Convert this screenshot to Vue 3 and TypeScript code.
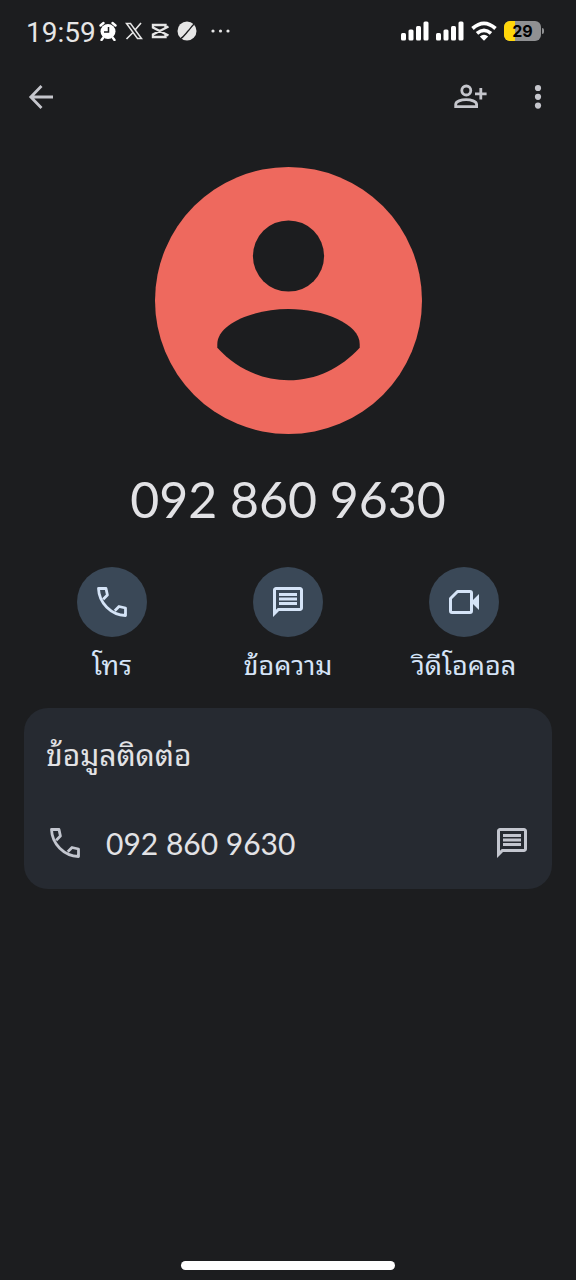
<script setup lang="ts">
type IconName = 'call' | 'chat' | 'video'

interface Action {
  icon: IconName
  label: string
}

const phoneNumber = '092 860 9630'
const batteryLevel = 29

const actions: Action[] = [
  { icon: 'call', label: 'โทร' },
  { icon: 'chat', label: 'ข้อความ' },
  { icon: 'video', label: 'วิดีโอคอล' },
]
</script>

<template>
  <div class="screen">
    <div class="status">
      <div class="status-left">
        <span class="time">19:59</span>
        <svg width="18" height="20" viewBox="0 0 18 20" aria-hidden="true">
          <circle cx="9" cy="10.500" r="7.500" fill="#fff" />
          <path d="M1.500 4.500 4.500 2M16.500 4.500 13.500 2M4 17 2.500 19M14 17l1.500 2" stroke="#fff" stroke-width="2.400" stroke-linecap="round" />
          <path d="M9.500 6v5H5" fill="none" stroke="#1c1d1f" stroke-width="1.500" />
        </svg>
        <svg width="18" height="18" viewBox="0 0 18 18" fill="none" stroke="#e6e6e6" aria-hidden="true">
          <path d="M1.500 1.500h4L16.500 16.500h-4z" stroke-width="1.500" />
          <path d="M16 1 10 8M8 10.500 1.500 17" stroke-width="1.600" />
        </svg>
        <svg width="18" height="18" viewBox="0 0 18 18" fill="none" stroke="#e6e6e6" stroke-width="2.400" aria-hidden="true">
          <path d="M17.500 4.500 2 12.500v2.500h12.500v-2.500M17.500 13.500 2 5.500V3h12.500v2.500" />
        </svg>
        <svg width="20" height="20" viewBox="0 0 20 20" aria-hidden="true">
          <circle cx="10" cy="10" r="9.500" fill="#e6e6e6" />
          <path d="M3 18C7 16 9 12 12 9c2-3 4-5 6-7" fill="none" stroke="#1c1d1f" stroke-width="1.300" />
        </svg>
        <svg width="20" height="4" viewBox="0 0 20 4" fill="#e6e6e6" aria-hidden="true">
          <circle cx="2" cy="2" r="1.600" /><circle cx="9.500" cy="2" r="1.600" /><circle cx="17" cy="2" r="1.600" />
        </svg>
      </div>
      <div class="status-right">
        <svg v-for="n in 2" :key="n" width="28" height="20" viewBox="0 0 28 20" fill="#fff" aria-hidden="true">
          <rect x="0" y="12" width="5" height="7.500" rx="1.500" />
          <rect x="7.500" y="8.500" width="5" height="11" rx="1.500" />
          <rect x="15" y="5" width="5" height="14.500" rx="1.500" />
          <rect x="22.500" y="0.500" width="5" height="19" rx="1.500" />
        </svg>
        <svg width="26" height="20" viewBox="0 0 26 20" fill="none" stroke="#fff" stroke-width="3.700" aria-hidden="true">
          <path d="M1.500 7.500Q13-2.800 24.500 7.500M6 12.400q7-6 14 0" />
          <path d="M8.800 15.600q4.200-3.600 8.400 0L13 19.700z" fill="#fff" stroke="none" />
        </svg>
        <div class="battery">
          <div class="battery-body">
            <div class="battery-fill" :style="{ width: batteryLevel + '%' }"></div>
            <span class="battery-text">{{ batteryLevel }}</span>
          </div>
          <div class="battery-tip"></div>
        </div>
      </div>
    </div>

    <header class="bar">
      <button type="button" class="icon-button" aria-label="ย้อนกลับ">
        <svg width="36" height="36" viewBox="0 0 36 36" fill="none" stroke="#c5c6cc" stroke-width="2.800" aria-hidden="true">
          <path d="M30 18H9M18.500 7 7.800 18l10.700 11" />
        </svg>
      </button>
      <div class="bar-end">
        <button type="button" class="icon-button" aria-label="เพิ่มรายชื่อติดต่อ">
          <svg width="36" height="36" viewBox="0 0 36 36" fill="none" stroke="#c5c6cc" stroke-width="2.800" aria-hidden="true">
            <circle cx="14.300" cy="11.500" r="4.500" />
            <path d="M3.700 27.700V25.500c0-3.200 5.500-4.900 10.400-4.900s10.500 1.700 10.500 4.900v2.200zM28.800 9v11.600M23 14.800h11.600" />
          </svg>
        </button>
        <button type="button" class="icon-button" aria-label="ตัวเลือกเพิ่มเติม">
          <svg width="36" height="36" viewBox="0 0 36 36" fill="#c5c6cc" aria-hidden="true">
            <circle cx="18" cy="9" r="3.100" /><circle cx="18" cy="17.800" r="3.100" /><circle cx="18" cy="26.600" r="3.100" />
          </svg>
        </button>
      </div>
    </header>

    <main class="content">
      <svg class="avatar" viewBox="0 0 267 267" aria-hidden="true">
        <circle cx="133.500" cy="133.500" r="133.500" fill="#ee695e" />
        <circle cx="133.500" cy="89" r="35.600" fill="#1c1d1f" />
        <path d="M62.300 180.700V177c0-20 36-35 71.200-35s71.200 15 71.200 35v3.700C186 201 161 213.300 133.500 213.300S81 201 62.300 180.700z" fill="#1c1d1f" />
      </svg>

      <h1 class="number">{{ phoneNumber }}</h1>

      <div class="actions">
        <button v-for="action in actions" :key="action.icon" type="button" class="action">
          <span class="disc">
            <svg v-if="action.icon === 'call'" width="30" height="30" viewBox="0 0 30 30" fill="none" stroke="#d5e4f7" stroke-width="2.800" stroke-linejoin="round" aria-hidden="true">
              <path d="M6.200 12.200 10.400 8 9 1.500H1.500C2 16 14 28 28.500 28.500V21L22 19.500l-4.200 4.300" />
            </svg>
            <svg v-else-if="action.icon === 'chat'" width="36" height="36" viewBox="0 0 24 24" fill="#d5e4f7" aria-hidden="true">
              <path d="M4 4h16v12H5.170L4 17.170V4m0-2c-1.100 0-2 .9-2 2v18l4-4h14c1.100 0 2-.9 2-2V4c0-1.100-.9-2-2-2H4zm2 10h12v2H6zm0-3h12v2H6zm0-3h12v2H6z" />
            </svg>
            <svg v-else width="30" height="24" viewBox="0 0 30 24" aria-hidden="true">
              <path d="M1.500 8.500v12.500q0 1.500 1.500 1.500h18q1.500 0 1.500-1.500V3q0-1.500-1.500-1.500H8.500z" fill="none" stroke="#d5e4f7" stroke-width="3" stroke-linejoin="round" />
              <path d="M23 11 30 4v16l-7-7z" fill="#d5e4f7" />
            </svg>
          </span>
          <span class="action-label">{{ action.label }}</span>
        </button>
      </div>

      <section class="card">
        <h2 class="card-title">ข้อมูลติดต่อ</h2>
        <div class="row">
          <svg width="30" height="30" viewBox="0 0 30 30" fill="none" stroke="#c3c6cf" stroke-width="2.800" stroke-linejoin="round" aria-hidden="true">
            <path d="M6.200 12.200 10.400 8 9 1.500H1.500C2 16 14 28 28.500 28.500V21L22 19.500l-4.200 4.300" />
          </svg>
          <a class="row-number" href="tel:0928609630">{{ phoneNumber }}</a>
          <button type="button" class="icon-button" aria-label="ส่งข้อความ">
            <svg width="36" height="36" viewBox="0 0 24 24" fill="#c3c6cf" aria-hidden="true">
              <path d="M4 4h16v12H5.170L4 17.170V4m0-2c-1.100 0-2 .9-2 2v18l4-4h14c1.100 0 2-.9 2-2V4c0-1.100-.9-2-2-2H4zm2 10h12v2H6zm0-3h12v2H6zm0-3h12v2H6z" />
            </svg>
          </button>
        </div>
      </section>
    </main>

    <div class="home-bar"></div>
  </div>
</template>

<style>
body {
  margin: 0;
  background: #1c1d1f;
}
</style>

<style scoped>
.screen {
  box-sizing: border-box;
  min-height: 100vh;
  display: flex;
  flex-direction: column;
  background: #1c1d1f;
  color: #e2e2e5;
  font-family: Lato, "Noto Sans Thai Looped", "Noto Looped Thai", Loma, Garuda, Waree, sans-serif;
}

svg {
  display: block;
  flex: none;
}

button {
  margin: 0;
  padding: 0;
  border: 0;
  background: none;
  color: inherit;
  font: inherit;
  cursor: pointer;
}

.status {
  height: 62px;
  padding: 0 32px 0 26px;
  display: flex;
  align-items: center;
  justify-content: space-between;
}

.status-left,
.status-right {
  display: flex;
  align-items: center;
  gap: 8px;
}

.status-right {
  gap: 7px;
}

.time {
  margin-right: -5px;
  padding-top: 4px;
  font-family: Roboto, sans-serif;
  font-size: 28px;
  line-height: 32px;
  color: #e6e6e6;
}

.status-left svg:last-child {
  margin-left: 6px;
}

.battery {
  display: flex;
  align-items: center;
  gap: 1px;
}

.battery-body {
  position: relative;
  width: 37px;
  height: 20px;
  border-radius: 6px;
  overflow: hidden;
  background: #8f9092;
}

.battery-fill {
  height: 100%;
  background: #ffd60a;
}

.battery-text {
  position: absolute;
  inset: 0;
  text-align: center;
  font-family: Inter, sans-serif;
  font-size: 16px;
  font-weight: 700;
  line-height: 20px;
  color: #000;
}

.battery-tip {
  width: 2px;
  height: 6px;
  border-radius: 0 2px 2px 0;
  background: #8f9092;
}

.bar {
  height: 70px;
  padding: 0 20px 0 23px;
  display: flex;
  align-items: center;
  justify-content: space-between;
}

.bar-end {
  display: flex;
  gap: 32px;
}

.content {
  padding: 35px 24px 24px;
  display: flex;
  flex-direction: column;
  align-items: center;
}

.avatar {
  width: 267px;
  height: 267px;
}

.number {
  margin: 34px 0 0;
  font-size: 50px;
  font-weight: 400;
  line-height: 62px;
}

.actions {
  width: 100%;
  margin-top: 37px;
  display: grid;
  grid-template-columns: repeat(3, 1fr);
}

.action {
  display: flex;
  flex-direction: column;
  align-items: center;
  color: #d5e4f7;
}

.disc {
  width: 70px;
  height: 70px;
  border-radius: 50%;
  display: grid;
  place-items: center;
  background: #3a4857;
}

.action-label {
  margin-top: 8px;
  font-size: 27px;
  line-height: 40px;
}

.card {
  box-sizing: border-box;
  width: 100%;
  margin-top: 23px;
  padding: 24px 22px 28px;
  border-radius: 24px;
  background: #262a31;
}

.card-title {
  margin: 0;
  font-size: 30px;
  font-weight: 400;
  line-height: 44px;
}

.row {
  margin-top: 49px;
  padding-left: 4px;
  display: flex;
  align-items: center;
}

.row-number {
  flex: 1;
  margin-left: 26px;
  font-size: 30px;
  line-height: 36px;
  color: inherit;
  text-decoration: none;
}

.home-bar {
  width: 37%;
  height: 9px;
  margin: auto auto 10px;
  border-radius: 5px;
  background: #fff;
}
</style>
